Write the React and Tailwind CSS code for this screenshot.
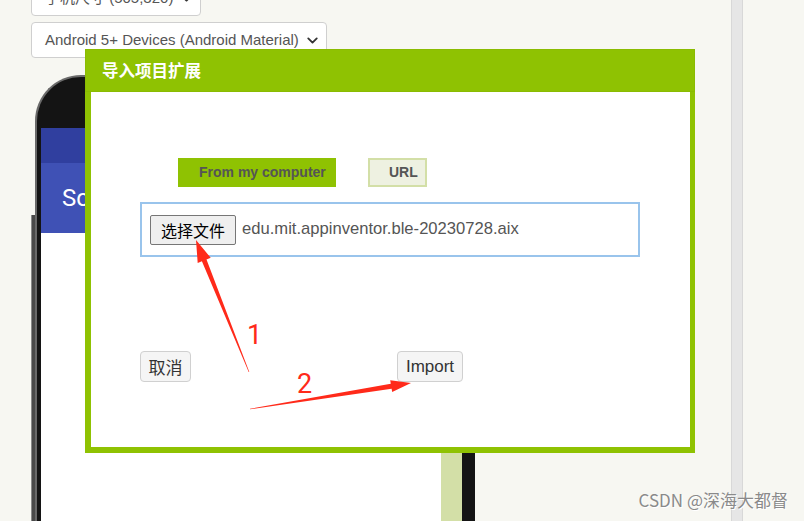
import { ChevronDown } from "lucide-react";

const sans = "font-['Liberation_Sans','Noto_Sans_CJK_SC',Arial,sans-serif]";
const cjk = "font-['Noto_Sans_CJK_SC','Liberation_Sans',sans-serif]";

function Select({ width, label, className = "" }) {
  return (
    <div className={`shrink-0 flex items-center justify-between h-[36px] pl-[13px] pr-[5px] bg-white border border-[#cfcfcf] rounded-[4px] ${className}`} style={{ width }}>
      <span className="text-[15px] text-[#555] whitespace-nowrap">{label}</span>
      <ChevronDown size={17} strokeWidth={2.6} className="text-[#333]" />
    </div>
  );
}

function Phone() {
  return (
    <div className="shrink-0 flex mt-[17px]">
      <div className="shrink-0 w-[4px] mt-[140px] h-[400px] bg-[#4a4a4a] border-l border-[#8a8a8a]" />
      <div className="shrink-0 w-[440px] h-[460px] bg-[#141414] rounded-tl-[46px] rounded-tr-[46px] border-t-2 border-l-2 border-[#6a6a6a] pt-[51px] pl-[4px] pr-[13px]">
        <div className="flex h-full">
          <div className="flex-1 flex flex-col bg-white">
            <div className="shrink-0 h-[35px] bg-[#303f9f]" />
            <div className="shrink-0 h-[70px] bg-[#3f51b5] flex items-center pl-[21px]">
              <span className="text-white text-[24px] font-['Roboto',sans-serif]">Screen1</span>
            </div>
          </div>
          <div className="shrink-0 w-[21px] bg-[#d3dfa7]" />
        </div>
      </div>
    </div>
  );
}

function Arrows() {
  return (
    <svg className="absolute inset-0 pointer-events-none" width="804" height="521" viewBox="0 0 804 521">
      <polygon fill="#ff2a1a" points="249.3,372 248.7,372 201.9,261.3 197.7,263.0 196,240 210.7,257.8 206.5,259.5" />
      <polygon fill="#ff2a1a" points="250,409.3 250,408.7 390.8,383.7 390.2,380.3 411,383 392.2,392.1 391.6,388.7" />
      <text x="247" y="344" fill="#ff2a1a" fontSize="27" fontFamily="Roboto, sans-serif">1</text>
      <text x="297" y="393" fill="#ff2a1a" fontSize="27" fontFamily="Roboto, sans-serif">2</text>
    </svg>
  );
}

function Dialog() {
  return (
    <div className="absolute left-[85px] top-[49px] w-[610px] h-[404px] bg-[#8fc202] pl-[6px] pr-[5px] pb-[6px] flex flex-col">
      <div className="shrink-0 h-[43px] flex items-center border border-[#8abb02] -ml-[6px] -mr-[5px] pl-[16px]">
        <span className={`text-white text-[16.5px] font-bold ${cjk}`}>导入项目扩展</span>
      </div>
      <div className="flex-1 bg-white flex flex-col pl-[49px] pt-[66px]">
        <div className="flex items-center">
          <div className="ml-[38px] w-[158px] h-[29px] bg-[#8fc202] flex items-center pl-[21px]">
            <span className="text-[14px] font-bold text-[#555]">From my computer</span>
          </div>
          <div className="ml-[32px] w-[59px] h-[29px] bg-[#eef1e1] border-2 border-[#d3dfa7] flex items-center pl-[19px]">
            <span className="text-[14px] font-bold text-[#555]">URL</span>
          </div>
        </div>
        <div className="mt-[15px] w-[500px] h-[55px] border-2 border-[#99c4ec] flex items-center pl-[8px]">
          <div className={`h-[30px] px-[10px] flex items-center bg-[#efefef] border border-[#767676] rounded-[2px] text-[16px] text-black ${cjk}`}>选择文件</div>
          <span className="ml-[6px] text-[16.6px] text-[#555]">edu.mit.appinventor.ble-20230728.aix</span>
        </div>
        <div className="mt-[94px] flex items-center">
          <div className={`h-[31px] w-[51px] flex items-center justify-center bg-[#f5f5f5] border border-[#d0d0d0] rounded-[4px] text-[17px] text-[#333] ${cjk}`}>取消</div>
          <div className="ml-[206px] h-[31px] w-[66px] flex items-center justify-center bg-[#f5f5f5] border border-[#d0d0d0] rounded-[4px] text-[17px] text-[#333]">Import</div>
        </div>
      </div>
    </div>
  );
}

export default function App() {
  return (
    <div className={`relative w-[804px] h-[521px] overflow-hidden bg-[#f7f7f2] flex ${sans}`}>
      <div className="shrink-0 w-[731px] flex flex-col pl-[31px]">
        <Select width={170} label="手机尺寸 (505,320)" className="-mt-[20px]" />
        <Select width={296} label="Android 5+ Devices (Android Material)" className="mt-[6px]" />
        <Phone />
      </div>
      <div className="shrink-0 w-[12px] h-full bg-[#e6e6e6] border-x border-[#d8d8d8]" />
      <Dialog />
      <Arrows />
      <div className={`absolute right-[16px] bottom-[9px] text-[17px] text-[#8a8a8a] [text-shadow:1px_1px_0_#fff] ${cjk}`}>CSDN @深海大都督</div>
    </div>
  );
}
